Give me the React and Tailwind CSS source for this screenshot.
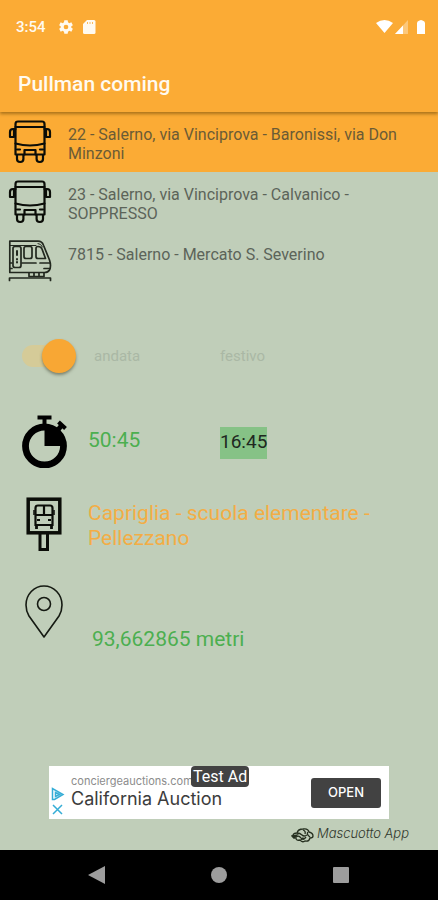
import React from "react";

function BusIcon() {
  return (
    <svg viewBox="0 0 44 44" className="size-11 shrink-0" fill="none" stroke="#0b0d08" strokeWidth="2.200" strokeLinejoin="round" strokeLinecap="round" aria-hidden="true">
      <path d="M7.500 34.500V4q0-2.500 2.500-2.500h24Q36.500 1.500 36.500 4v30.500z" />
      <path d="M7.500 7h29M7.500 23.500q14.500 4 29 0" />
      <path d="M7.500 9H5Q2 9 2 12v5h4V10M36.500 9H39q3 0 3 3v5h-4V10" />
      <path d="M16.500 34.500v-4.500h11v4.500M9 29.500h3M32 29.500h3" />
      <path d="M9 35v4q0 3 3.200 3t3.200-3v-4M28.600 35v4q0 3 3.200 3t3.200-3v-4" />
    </svg>
  );
}

function TrainIcon() {
  return (
    <svg viewBox="0 0 44 44" className="size-11 shrink-0" fill="none" stroke="#22281f" strokeWidth="1.700" strokeLinejoin="round" strokeLinecap="round" aria-hidden="true">
      <path d="M1.800 1.200H30q4 0 5.500 4L41.500 20q2 6 0 10-1.500 2.500-5 2.500H1.800z" />
      <path d="M2 5.500H28M30 3.500q3 0 4.500 3.500" strokeWidth="1" />
      <rect x="5" y="6.500" width="8" height="21" rx="2" />
      <path d="M9 11v4M9 19v.5M9 22v.5" strokeWidth="2" />
      <rect x="16" y="6.500" width="8" height="12" rx="2" />
      <path d="M28 8.500q0-2 2-2 3 0 4 2.500l3.500 9.500H30q-2 0-2-2z" />
      <path d="M2 23H4M14 23h14M32 23h9.500M36 28.500h6M2 28.500H4" />
      <path d="M21 33v3.500h15V33M26 33v3.500M31 33v3.500" />
      <path d="M1.500 40.500v-2.500h41v2.500" />
    </svg>
  );
}

function StopwatchIcon() {
  return (
    <svg viewBox="0 0 46 54" className="h-[54px] w-[46px]" fill="none" stroke="#000" aria-hidden="true">
      <circle cx="22.500" cy="32" r="19" strokeWidth="6.800" />
      <path d="M22.500 32V12.500A19.500 19.500 0 0 1 42 32z" fill="#000" stroke="none" />
      <path d="M15.500 3.500h14M22.500 4v6" strokeWidth="4" />
      <path d="m35 17 5-6" strokeWidth="5" />
      <path d="m36.500 8 7 6.500" strokeWidth="4" />
    </svg>
  );
}

function BusStopIcon() {
  return (
    <svg viewBox="0 0 36 54" className="h-[54px] w-9" fill="none" stroke="#0b0d08" aria-hidden="true">
      <rect x="2.200" y="2.200" width="31.600" height="33.600" strokeWidth="3.500" />
      <path d="M14 37v15.500h7.500V37" strokeWidth="3" />
      <path d="M9.500 28V11q0-2.500 2.500-2.500h12q2.500 0 2.500 2.500v17z" strokeWidth="2.200" />
      <path d="M9.500 18h17M18 9v9M11 23h3M22 23h3" strokeWidth="2.200" />
      <path d="M10.500 28v4M25.500 28v4" strokeWidth="2.800" />
      <path d="M8 13v5M28 13v5" strokeWidth="1.500" />
    </svg>
  );
}

function PinIcon() {
  return (
    <svg viewBox="0 0 38 54" className="h-[54px] w-[38px]" fill="none" stroke="#151a12" strokeWidth="1.600" aria-hidden="true">
      <path d="M19 52 4 31Q1 26 1 20a18 19 0 0 1 36 0q0 6-3 11z" strokeLinejoin="round" />
      <circle cx="19" cy="19" r="6.500" />
    </svg>
  );
}

function RouteRow({ icon, label, selected }) {
  return (
    <li>
      <button
        type="button"
        aria-pressed={selected}
        className={
          "flex h-[60px] w-full items-start pl-2 pr-8 text-left text-base leading-[19px] " +
          (selected ? "bg-[#fbab35] text-[#6b5b35]" : "text-[#5c6459]")
        }
      >
        <span className="pt-2">{icon}</span>
        <span className="pt-[13px] pl-4">{label}</span>
      </button>
    </li>
  );
}

export default function App() {
  return (
    <div className="flex min-h-screen flex-col bg-[#c0ceb9] font-['Roboto',sans-serif]">
      <header className="relative h-28 bg-[#fbab35] text-[#fffaf0] shadow-[0_2px_3px_rgba(90,60,0,0.5)]">
        <div className="flex h-[54px] items-center pl-4 pr-3 text-[15px] font-medium">
          <span>3:54</span>
          <svg viewBox="0 0 24 24" className="ml-3 size-4" fill="#fffaf0" aria-hidden="true">
            <path fillRule="evenodd" d="M9.500 2h5l.5 3 2 1.200 3-1.200 2.300 4.200-2.300 1.800v2l2.300 1.800L20 19l-3-1.200-2 1.200-.5 3h-5L9 19l-2-1.200L4 19l-2.300-4.200L4 13v-2L1.700 9.200 4 5l3 1.200L9 5zM12 8.500a3.500 3.500 0 1 0 0 7 3.500 3.500 0 0 0 0-7z" />
          </svg>
          <svg viewBox="0 0 14 16" className="ml-2 h-4 w-[14px]" fill="#fffaf0" aria-hidden="true">
            <path d="M5 1h7q1.500 0 1.500 1.500v11Q13.500 15 12 15H2.500Q1 15 1 13.500V5z" />
            <path d="M5.500 3v2M8 3v2M10.500 3v2" stroke="#fbab35" strokeWidth=".8" />
          </svg>
          <svg viewBox="0 0 50 16" className="ml-auto h-4 w-[50px]" fill="#fff" aria-hidden="true">
            <path d="M0 4q8.500-6 17 0L8.500 14z" />
            <path d="M32 1v14H19z" opacity=".35" />
            <path d="M27 6.500V15h-8z" />
            <path d="M41 4q0-2 2.500-2.500Q45 .5 46.500 1.500 49 2 49 4v11h-8z" />
          </svg>
        </div>
        <h1 className="pt-4 pl-[18px] text-[21px] leading-7 font-medium">Pullman coming</h1>
      </header>

      <main className="flex flex-1 flex-col">
        <ul>
          <RouteRow icon={<BusIcon />} label="22 - Salerno, via Vinciprova - Baronissi, via Don Minzoni" selected />
          <RouteRow icon={<BusIcon />} label="23 - Salerno, via Vinciprova - Calvanico - SOPPRESSO" selected={false} />
          <RouteRow icon={<TrainIcon />} label="7815 - Salerno - Mercato S. Severino" selected={false} />
        </ul>

        <section className="grid grid-cols-[88px_132px_1fr] pt-7">
          <label htmlFor="direction" className="col-span-2 grid h-[72px] grid-cols-[88px_1fr] items-center text-[15px] text-[#aab8a5]">
            <span className="relative ml-[22px] flex h-9 w-[54px] items-center">
              <input id="direction" type="checkbox" role="switch" defaultChecked className="h-[22px] w-11 appearance-none rounded-full bg-[#d5cb98]" />
              <span className="absolute left-5 top-px size-[34px] rounded-full bg-[#f8a734] shadow-[0_2px_3px_rgba(60,60,40,0.5)]" />
            </span>
            <span className="pl-[6px]">andata</span>
          </label>
          <span className="self-center text-[15px] text-[#aab8a5]">festivo</span>

          <div className="flex h-[98px] items-center pl-[22px]">
            <StopwatchIcon />
          </div>
          <span className="self-center text-[21px] text-[#4caf50]">50:45</span>
          <div className="flex items-center pt-1">
            <span className="h-8 bg-[#86c286] text-[19px] leading-[30px] text-[#20281f]">16:45</span>
          </div>

          <div className="flex h-[68px] items-center pl-[26px]">
            <BusStopIcon />
          </div>
          <p className="col-span-2 self-center pt-1 pr-10 text-[21px] leading-[25px] text-[#f3ad45]">
            Capriglia - scuola elementare - Pellezzano
          </p>

          <div className="flex h-[108px] items-center pl-[25px]">
            <PinIcon />
          </div>
          <span className="col-span-2 self-end pb-[13px] pl-1 text-[21px] leading-7 text-[#4caf50]">93,662865 metri</span>
        </section>

        <footer className="mt-auto flex flex-col items-center">
          <aside className="relative flex h-[53px] w-[340px] items-center bg-white pl-[2px] pr-2">
            <div className="flex w-5 flex-col items-start self-end">
              <svg viewBox="0 0 14 32" className="h-8 w-[14px]" fill="none" stroke="#35add6" strokeWidth="1.500" aria-hidden="true">
                <path d="M1.500 1.500v11h2l8.500-5zM4.500 5.500v4L8.500 7.500z" />
                <path d="m2 18 9 9M11 18l-9 9" />
              </svg>
            </div>
            <div className="flex flex-1 flex-col pb-1 font-['Inter',sans-serif]">
              <span className="text-[11px] leading-4 text-[#8c8c8c]">conciergeauctions.com</span>
              <span className="text-lg leading-5 text-[#3c3c3c]">California Auction</span>
            </div>
            <button type="button" className="h-[30px] w-[70px] rounded-[3px] bg-[#424242] font-['Inter',sans-serif] text-[13px] font-medium text-white">
              OPEN
            </button>
            <span className="absolute left-[142px] top-0 h-[21px] rounded-sm bg-[#424242] px-[2px] text-base leading-[22px] text-white">Test Ad</span>
          </aside>
          <div className="flex h-[31px] items-center gap-[2px] self-end pr-[29px] text-[#30382c]">
            <svg viewBox="0 0 24 16" className="h-4 w-6" fill="none" stroke="#263020" strokeWidth="1.300" aria-hidden="true">
              <path d="M2 9q0-3 4-3 1-4 6-4 5-1 6 3 4 1 4 4 0 2-3 2-1 4-5 3-3 2-5-1-4 1-4-2-3 0-3-2z" />
              <path d="M6 6q3 0 5 2t5 0M5 10q3-2 5 1t5-1M12 3q3 1 2 4M17 5q-2 2 2 5M10 13q1-3 4-1" />
              <path d="m1 9 5-1-3 3z" fill="#263020" />
            </svg>
            <span className="pb-1 font-['Inter',sans-serif] text-[13px] leading-4 font-light italic">Mascuotto App</span>
          </div>
        </footer>
      </main>

      <nav className="flex h-[50px] items-center justify-center gap-[104px] bg-black">
        <button type="button" aria-label="Back" className="size-[18px]">
          <svg viewBox="0 0 18 18" fill="#9d9d9d"><path d="M0 9 17 0v18z" /></svg>
        </button>
        <button type="button" aria-label="Home" className="size-[18px]">
          <svg viewBox="0 0 18 18" fill="#9d9d9d"><circle cx="9" cy="9" r="8" /></svg>
        </button>
        <button type="button" aria-label="Recent apps" className="size-[18px]">
          <svg viewBox="0 0 18 18" fill="#9d9d9d"><rect x="1" y="1" width="16" height="16" rx="1" /></svg>
        </button>
      </nav>
    </div>
  );
}
